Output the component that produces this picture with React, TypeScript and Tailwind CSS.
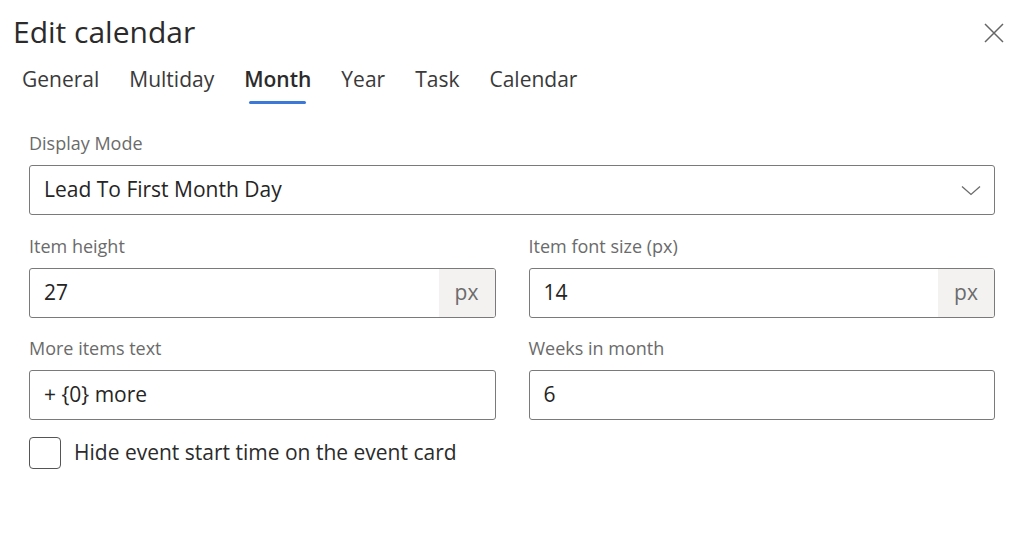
import React from 'react';

const tabs = ['General', 'Multiday', 'Month', 'Year', 'Task', 'Calendar'];

const Label: React.FC<{ text: string }> = ({ text }) => (
  <div className="text-[18px] leading-[24px] text-[#6b6b6b] mb-[10px]">{text}</div>
);

const TextField: React.FC<{ label: string; value: string; suffix?: string }> = ({ label, value, suffix }) => (
  <div className="flex-1 min-w-0">
    <Label text={label} />
    <div className="flex h-[50px] border border-[#7a7a7a] rounded-[3px] overflow-hidden">
      <div className="flex-1 flex items-center px-[14px] text-[21px] text-[#252525]">{value}</div>
      {suffix && (
        <div className="w-[56px] bg-[#f3f2f1] flex items-center justify-center text-[21px] text-[#6b6b6b]">{suffix}</div>
      )}
    </div>
  </div>
);

export default function App() {
  return (
    <div className="w-[1024px] h-[536px] bg-white text-[#2b2b2b] overflow-hidden" style={{ fontFamily: '"Open Sans", "Noto Sans", sans-serif' }}>
      <div className="flex items-start justify-between pl-[13px] pr-[20px] pt-[12px]">
        <h1 className="text-[30px] leading-[40px] text-[#2b2b2b]">Edit calendar</h1>
        <button className="mt-[11px] text-[#666]">
          <svg width="20" height="20" viewBox="0 0 20 20" fill="none" stroke="currentColor" strokeWidth="1.5">
            <path d="M1 1L19 19M19 1L1 19" />
          </svg>
        </button>
      </div>

      <div className="flex pl-[22px] mt-[15px] gap-[30px]">
        {tabs.map((t) => (
          <div key={t} className="flex flex-col">
            <span className={`text-[21px] leading-[24px] ${t === 'Month' ? 'font-semibold text-[#2b2b2b]' : 'text-[#3a3a3a]'}`}>{t}</span>
            <div className={`mt-[10px] mx-[5px] h-[3px] rounded-full ${t === 'Month' ? 'bg-[#3b78d8]' : 'bg-transparent'}`} />
          </div>
        ))}
      </div>

      <div className="px-[29px] pt-[27px]">
        <Label text="Display Mode" />
        <div className="flex items-center justify-between h-[50px] border border-[#7a7a7a] rounded-[3px] pl-[14px] pr-[13px]">
          <span className="text-[21px] text-[#252525]">Lead To First Month Day</span>
          <svg width="20" height="11" viewBox="0 0 20 11" fill="none" stroke="#6b6b6b" strokeWidth="1.3">
            <path d="M1 1.5L10 9.5L19 1.5" />
          </svg>
        </div>

        <div className="flex gap-[33px] mt-[19px]">
          <TextField label="Item height" value="27" suffix="px" />
          <TextField label="Item font size (px)" value="14" suffix="px" />
        </div>

        <div className="flex gap-[33px] mt-[18px]">
          <TextField label="More items text" value="+ {0} more" />
          <TextField label="Weeks in month" value="6" />
        </div>

        <label className="flex items-center gap-[13px] mt-[17px]">
          <span className="w-[32px] h-[32px] border-[1.5px] border-[#555] rounded-[4px] bg-white" />
          <span className="text-[21px] text-[#2b2b2b]">Hide event start time on the event card</span>
        </label>
      </div>
    </div>
  );
}
